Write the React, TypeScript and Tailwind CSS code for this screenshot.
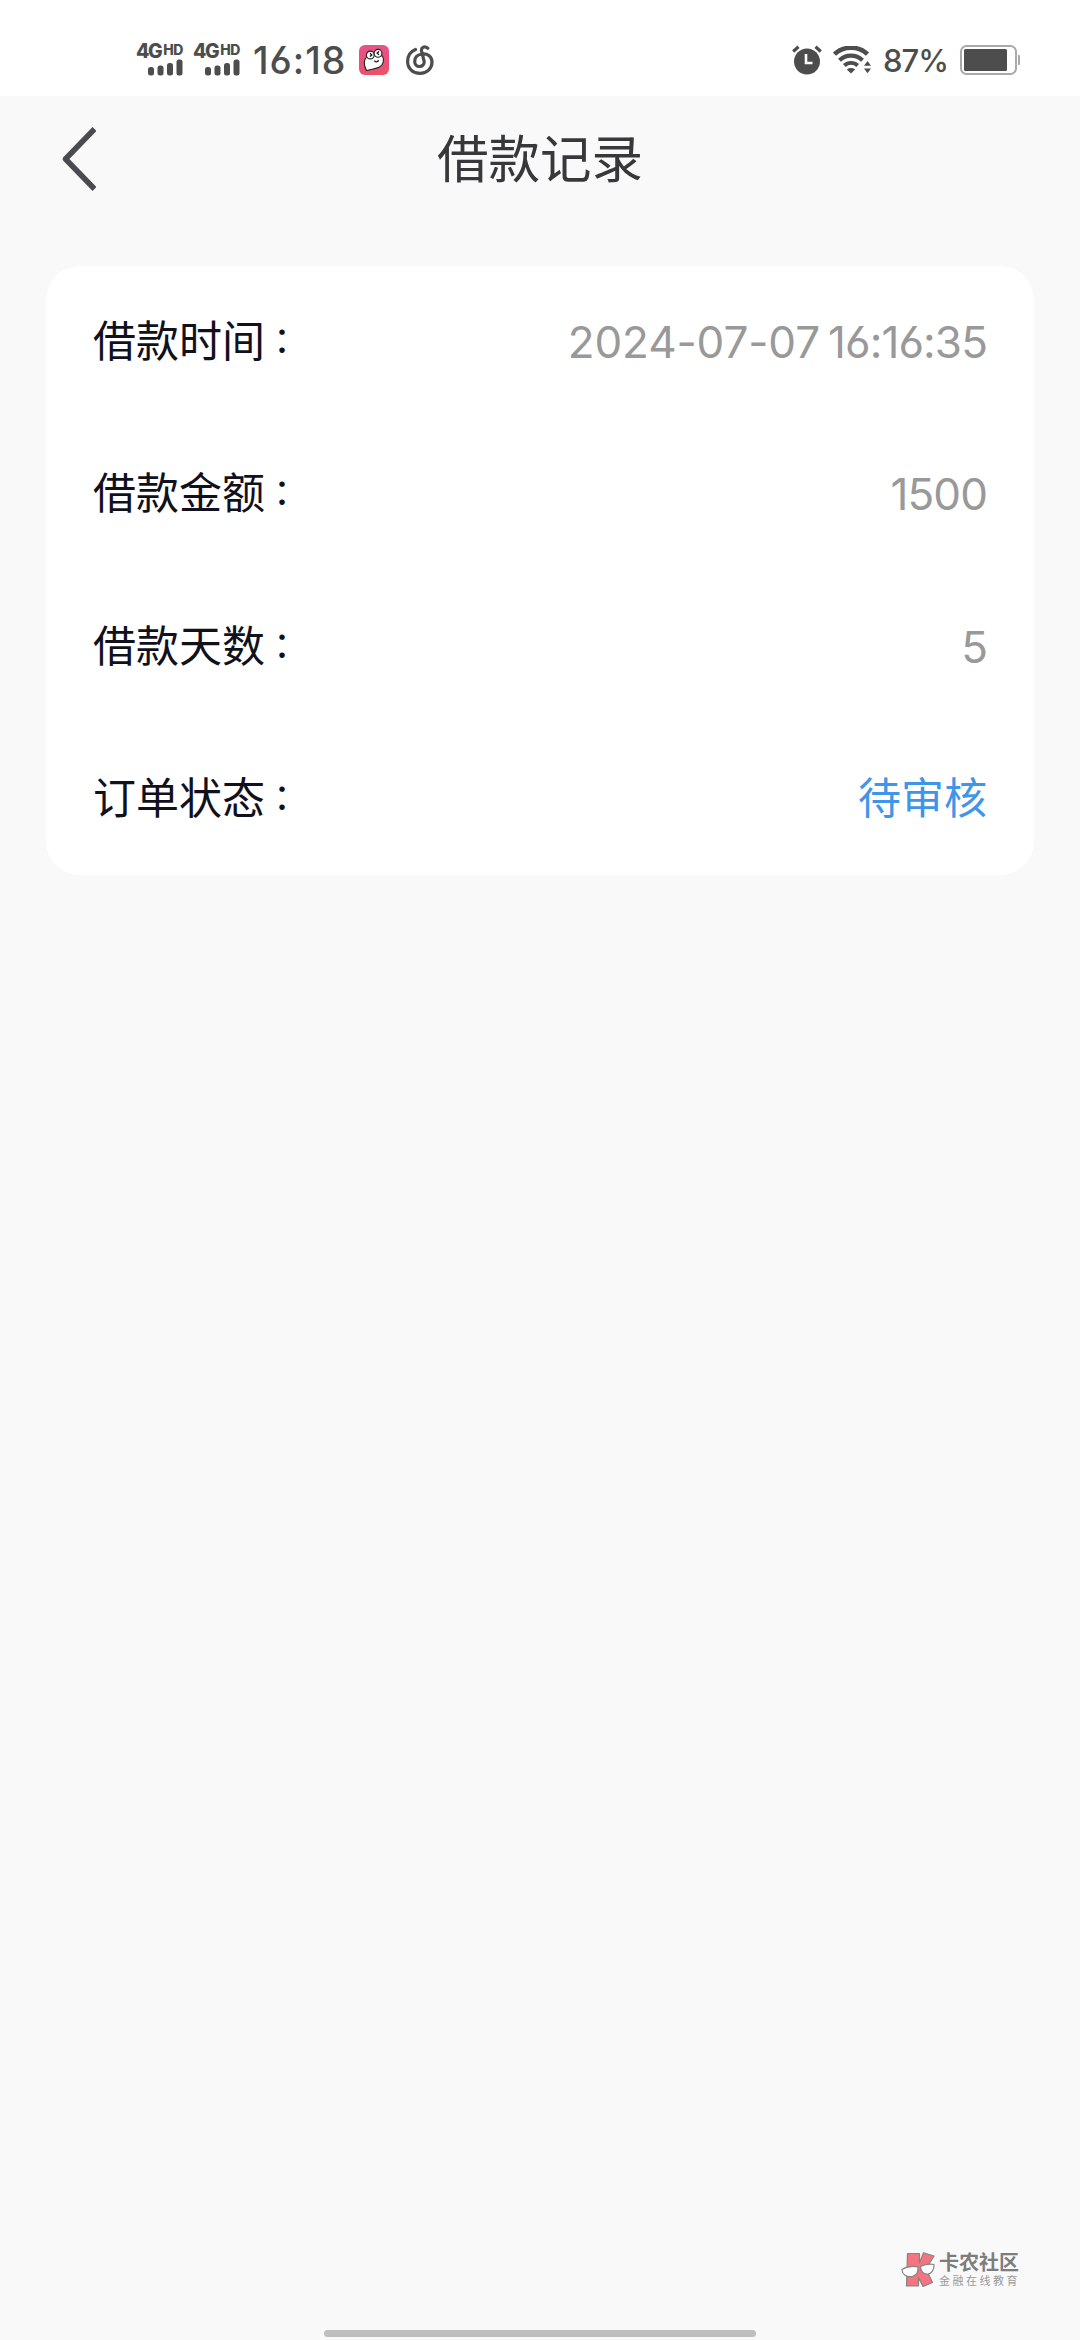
const records = [
  { label: "借款时间", value: "2024-07-07", time: "16:16:35" },
  { label: "借款金额", value: "1500" },
  { label: "借款天数", value: "5" },
  { label: "订单状态", value: "待审核", pending: true },
];

function Signal() {
  return (
    <div className="flex w-[47px] flex-col items-end">
      <div className="flex w-full items-start justify-between font-['Inter','Liberation_Sans',sans-serif] font-extrabold leading-none">
        <span className="text-[19.5px] leading-[15px] tracking-[-1.4px]">4G</span>
        <span className="text-[14px] leading-[11px] tracking-[-0.4px]">HD</span>
      </div>
      <svg width="36" height="17" viewBox="0 0 36 17" fill="#4d4d4d">
        <rect x="1" y="8" width="6" height="8.500" rx="2.500" />
        <rect x="10.500" y="6.500" width="6" height="10" rx="2.500" />
        <rect x="20" y="4" width="6" height="12.500" rx="2.500" />
        <rect x="29.500" y="0.500" width="6" height="16" rx="2.500" />
      </svg>
    </div>
  );
}

function PetIcon() {
  return (
    <svg width="30" height="30" viewBox="0 0 30 30">
      <defs>
        <linearGradient id="pet" x1="0" y1="0" x2="0" y2="1">
          <stop offset="0" stopColor="#e4538a" />
          <stop offset="1" stopColor="#ee5068" />
        </linearGradient>
      </defs>
      <rect width="30" height="30" rx="6" fill="url(#pet)" />
      <path d="M7.500 12C5 15 4.500 20 7.500 25.500C12 24 17 24 20.500 22C24.500 19.500 25.500 15 23.500 11L15 10Z" fill="#fff" stroke="#222" strokeWidth="1.100" />
      <circle cx="11.300" cy="10" r="3.900" fill="#fff" stroke="#222" strokeWidth="1.100" />
      <circle cx="19" cy="8.300" r="3.900" fill="#fff" stroke="#222" strokeWidth="1.100" />
      <path d="M11 8.200l1.800 1.700-1.800 1.600M20 6.600l-1.800 1.500 1.800 1.600" fill="none" stroke="#111" strokeWidth="1.300" />
      <path d="M15.500 15.500c.8 2.200 3.500 1.800 4-.5" fill="none" stroke="#222" strokeWidth="1.200" />
    </svg>
  );
}

function MusicIcon() {
  return (
    <svg width="28" height="30" viewBox="0 0 28 30" fill="none" stroke="#4d4d4d" strokeWidth="3.200" strokeLinecap="round">
      <path d="M9.500 4.500C4.500 6.500 1.600 11 1.600 16.500C1.600 23.500 7 28.400 14 28.400C21 28.400 26 23.500 26 17C26 11.500 21.500 8.500 16.500 9C11.500 9.500 8.700 12.500 8.700 16.500C8.700 19.500 10.800 21.500 13.500 21.500C16.500 21.500 18.700 19 18.100 16L15.500 6C14.900 2.500 18.500 0.500 21.800 3.300" />
    </svg>
  );
}

function AlarmIcon() {
  return (
    <svg width="30" height="30" viewBox="0 0 30 30" fill="none" stroke="#4d4d4d">
      <circle cx="15" cy="16.500" r="13" fill="#4d4d4d" stroke="none" />
      <path d="M1.200 6.500L6.500 1.800M28.800 6.500L23.500 1.800" strokeWidth="3.200" />
      <path d="M14 9V18H20.500" stroke="#fff" strokeWidth="2.600" />
    </svg>
  );
}

function WifiIcon() {
  return (
    <svg width="38" height="28" viewBox="0 0 38 28" fill="none" stroke="#4d4d4d">
      <path d="M1.500 8.200C10.500-.5 25.500-.5 34.500 8.200" strokeWidth="4.500" />
      <path d="M6.500 14.200C13 8 23 8 29.500 14.200" strokeWidth="4.200" />
      <path d="M11.300 19.500C15 16 21 16 24.700 19.500" strokeWidth="3.800" />
      <path d="M13.800 23.400Q18 20.800 22.200 23.400L18 27.500Z" fill="#4d4d4d" stroke="none" />
      <path d="M31 19.800L34.500 15L38 19.800ZM31 22.500L34.500 27.300L38 22.500Z" fill="#4d4d4d" stroke="none" />
    </svg>
  );
}

function BatteryIcon() {
  return (
    <svg width="60" height="30" viewBox="0 0 60 30">
      <rect x="1" y="1" width="55" height="28" rx="5.500" fill="#fff" stroke="#a9a9a9" strokeWidth="2" />
      <rect x="4" y="4" width="43" height="22" rx="1.500" fill="#4d4d4d" />
      <path d="M58 10h1q1 0 1 1v8q0 1-1 1h-1Z" fill="#a9a9a9" />
    </svg>
  );
}

function StatusBar() {
  return (
    <div className="flex h-24 items-center justify-between bg-white pl-[136px] pr-[60px] pt-6 text-[#4d4d4d]">
      <div className="flex items-center">
        <div className="flex gap-[10px]">
          <Signal />
          <Signal />
        </div>
        <span className="ml-[13px] w-[94px] whitespace-nowrap font-['Inter','Liberation_Sans',sans-serif] text-[37.5px] font-medium leading-[30px] tracking-[1px] [font-feature-settings:'cv03']">
          <span className="relative top-px">16:18</span>
        </span>
        <div className="ml-[12px] flex gap-[17px]">
          <PetIcon />
          <MusicIcon />
        </div>
      </div>
      <div className="flex items-center">
        <AlarmIcon />
        <div className="ml-[11px]">
          <WifiIcon />
        </div>
        <span className="ml-[12px] w-[77px] whitespace-nowrap font-['Inter','Liberation_Sans',sans-serif] text-[31px] font-medium leading-[30px] tracking-[-1px]">
          <span className="relative top-px">87%</span>
        </span>
        <BatteryIcon />
      </div>
    </div>
  );
}

function Watermark() {
  return (
    <div className="flex items-center gap-1">
      <svg width="34" height="36" viewBox="0 0 34 36" stroke="#858585" strokeWidth="1.200" strokeLinejoin="round">
        <path d="M6.500 1.500H18.500V11L22.500 .8L33 4L25 17L31.500 30.500L22 34.500L17.500 25.500V34H5.500Z" fill="#f4747f" />
        <path d="M.8 17.500C5 15 12 14 17 14.800C17.500 20 15.500 23.500 11 24.500C5.500 25.500 1.500 22.500 .8 17.500Z" fill="#fff" />
        <path d="M19.500 14.500C23.500 12.500 29 11.800 33 12.500C33.500 17.500 30.500 21.800 26.500 22C22 22.300 19.800 19 19.500 14.500Z" fill="#fff" />
      </svg>
      <div className="flex flex-col whitespace-nowrap pt-[3px] font-['Liberation_Sans','Noto_Sans_CJK_SC',sans-serif]">
        <span className="text-[20px] font-bold leading-[20px] text-[#7d7d7d]">卡农社区</span>
        <span className="text-[11px] leading-[16px] tracking-[2.5px] text-[#999]">金融在线教育</span>
      </div>
    </div>
  );
}

export default function App() {
  return (
    <div className="flex h-[2340px] w-[1080px] flex-col bg-[#f9f9f9] font-['Noto_Sans_CJK_SC',sans-serif]">
      <StatusBar />

      <header className="grid h-[126px] grid-cols-[1fr_auto_1fr] items-center px-[62px]">
        <svg width="34" height="64" viewBox="0 0 34 64" fill="none" stroke="#4a4b50" strokeWidth="5.500" strokeLinecap="butt" strokeLinejoin="round">
          <path d="M32.500 2L3.500 32L32.500 62" />
        </svg>
        <h1 className="pb-[6px] text-[51.500px] leading-[60px] text-[#37383c]">借款记录</h1>
      </header>

      <main className="mx-[46px] mt-[44px] rounded-[34px] bg-white px-[47px]">
        {records.map((r) => (
          <div key={r.label} className="flex h-[152.250px] items-center justify-between">
            <span className="flex pb-[8px] text-[43px] leading-[60px] text-[#11111d]">
              {r.label}
              <span className="-mt-px pl-[8px] text-[36px]">：</span>
            </span>
            {r.pending ? (
              <span className="pb-[8px] text-[43px] leading-[60px] text-[#3e95ea]">{r.value}</span>
            ) : (
              <span className="flex gap-[8px] font-['Inter','Liberation_Sans',sans-serif] text-[44px] leading-[60px] tracking-[-0.9px] text-[#999] [font-feature-settings:'cv03']">
                <span className={r.time ? "tracking-[-0.1px]" : ""}>{r.value}</span>
                {r.time && <span>{r.time}</span>}
              </span>
            )}
          </div>
        ))}
      </main>

      <footer className="mt-auto flex flex-col">
        <div className="flex justify-end pr-[60px]">
          <Watermark />
        </div>
        <div className="mx-auto mb-[3px] mt-[41px] h-[7px] w-[432px] rounded-full bg-[#bebebe]" />
      </footer>
    </div>
  );
}
